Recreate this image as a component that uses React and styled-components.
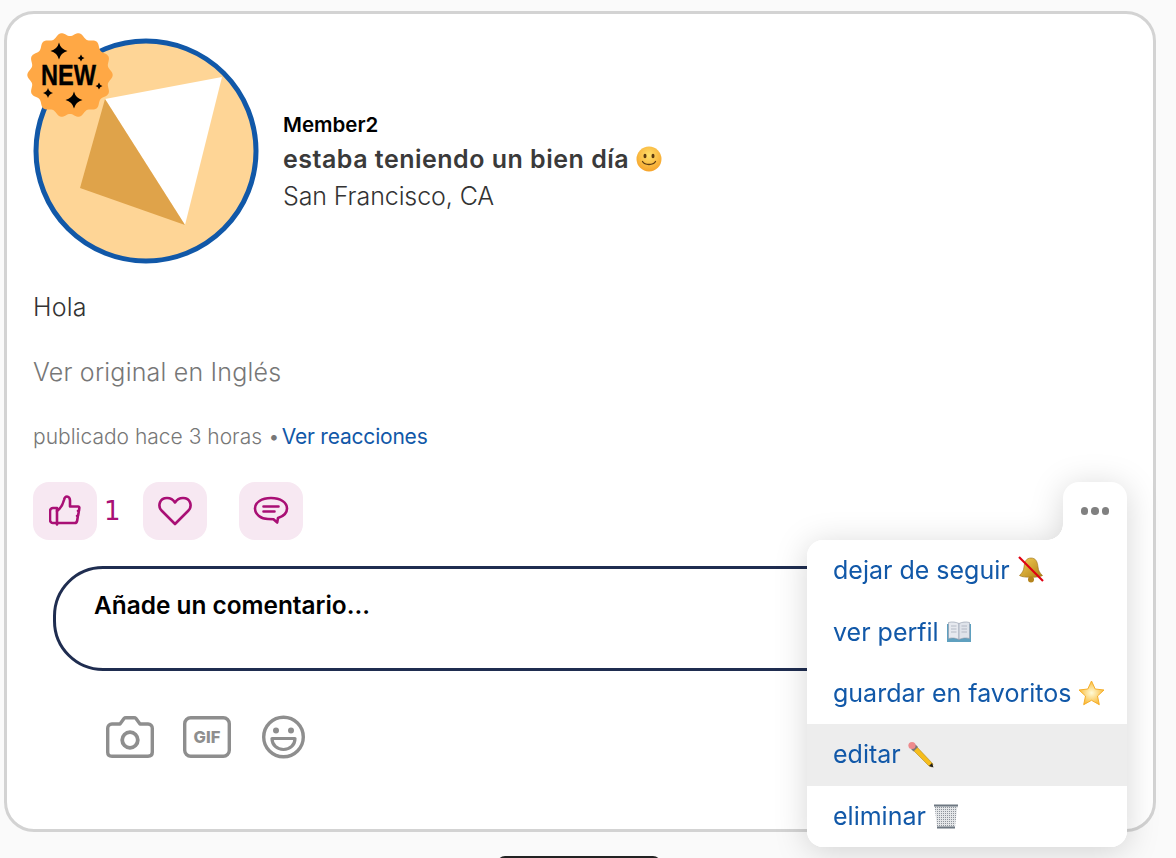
import styled, { createGlobalStyle } from "styled-components";

const GlobalStyle = createGlobalStyle`
  html, body {
    margin: 0;
    padding: 0;
    height: 858px;
    overflow: hidden;
    background: #fafafa;
    font-family: Inter, "Liberation Sans", sans-serif;
  }
`;

const Page = styled.div`
  width: 1176px;
  height: 858px;
  padding: 11px 0 0 4px;
  box-sizing: border-box;
  overflow: hidden;
`;

const Card = styled.div`
  position: relative;
  box-sizing: border-box;
  width: 1152px;
  height: 821px;
  padding: 24px 26px;
  background: #fff;
  border: 3px solid #d3d3d3;
  border-radius: 30px;
`;

const Header = styled.div`
  display: flex;
  align-items: center;
  gap: 24px;
`;

const AvatarWrap = styled.div`
  position: relative;
  width: 226px;
  height: 226px;
  flex: none;
`;

const Badge = styled.svg`
  position: absolute;
  left: -7px;
  top: -7px;
  width: 88px;
  height: 88px;
`;

const Info = styled.div`
  display: flex;
  flex-direction: column;
  padding-top: 21px;
`;

const Name = styled.div`
  font-size: 20.5px;
  line-height: 30px;
  font-weight: 600;
  color: #000;
`;

const Status = styled.div`
  display: flex;
  align-items: center;
  gap: 7px;
  font-size: 25px;
  line-height: 38px;
  font-weight: 600;
  color: #3a3a3a;
  letter-spacing: 0.5px;
`;

const Place = styled.div`
  font-size: 25px;
  line-height: 36px;
  font-weight: 300;
  color: #333;
  letter-spacing: -0.1px;
`;

const Body = styled.div`
  margin-top: ${(p) => p.$top}px;
  font-size: 25px;
  line-height: 30px;
  font-weight: 300;
  letter-spacing: 0.2px;
  color: ${(p) => p.$color};
`;

const Meta = styled.div`
  margin-top: 35px;
  font-size: 21px;
  line-height: 30px;
  font-weight: 300;
  color: #777;
`;

const MetaLink = styled.span`
  margin-left: -4px;
  color: #1158a8;
  font-weight: 400;
  letter-spacing: -0.2px;
`;

const Actions = styled.div`
  display: flex;
  align-items: center;
  margin-top: 30px;
  height: 58px;
`;

const ActionButton = styled.div`
  display: flex;
  align-items: center;
  justify-content: center;
  width: 64px;
  height: 58px;
  margin-right: ${(p) => p.$gap}px;
  background: #f7e8f2;
  border-radius: 16px;
`;

const Count = styled.span`
  width: 46px;
  padding-left: 7px;
  box-sizing: border-box;
  font-family: "DejaVu Sans", sans-serif;
  font-size: 26px;
  color: #a90f75;
`;

const MoreArea = styled.div`
  position: absolute;
  right: 26px;
  top: 468px;
  width: 320px;
  filter: drop-shadow(0 4px 16px rgba(0, 0, 0, 0.16));
`;

const MoreButton = styled.div`
  display: flex;
  align-items: center;
  justify-content: center;
  gap: 3px;
  position: relative;
  width: 64px;
  height: 58px;
  margin-left: auto;
  box-sizing: border-box;
  background: #fff;
  border-radius: 16px 16px 0 0;

  &::before {
    content: "";
    position: absolute;
    left: -16px;
    bottom: 0;
    width: 16px;
    height: 16px;
    background: radial-gradient(circle at 0 0, transparent 15.5px, #fff 16px);
  }
`;

const Dot = styled.span`
  width: 7.5px;
  height: 7.5px;
  border-radius: 50%;
  background: #808080;
`;

const Menu = styled.div`
  background: #fff;
  border-radius: 16px 0 16px 16px;
  overflow: hidden;
`;

const MenuItem = styled.div`
  display: flex;
  align-items: center;
  gap: 7px;
  height: 61.4px;
  padding: 0 0 1px 26px;
  box-sizing: border-box;
  font-size: 25px;
  font-weight: 400;
  color: #1158a8;
  background: ${(p) => (p.$active ? "#ededed" : "#fff")};
`;

const CommentBox = styled.div`
  box-sizing: border-box;
  height: 105px;
  margin: 26px 0 0 20px;
  padding: 21px 38px;
  border: 3px solid #1f2d50;
  border-radius: 50px;
  font-size: 24.4px;
  line-height: 30px;
  font-weight: 600;
  color: #000;
`;

const Tools = styled.div`
  display: flex;
  align-items: center;
  gap: 29px;
  margin: 44px 0 0 73px;
`;

const ToolSlot = styled.div`
  display: flex;
  margin-left: ${(p) => p.$left}px;
`;

const BottomPill = styled.div`
  width: 164px;
  height: 8px;
  margin: 24px 0 0 493px;
  background: #222;
  border-radius: 24px 24px 0 0;
`;

const scallopPath = () => {
  const points = [];
  for (let i = 0; i < 240; i++) {
    const a = (i / 240) * Math.PI * 2;
    const r = 40.8 + 1.9 * Math.cos(a * 14);
    points.push(`${(44 + r * Math.cos(a)).toFixed(2)} ${(44 + r * Math.sin(a)).toFixed(2)}`);
  }
  return `M${points.join("L")}Z`;
};

const starPath = (x, y, r) => {
  const k = r * 0.2;
  return `M${x} ${y - r}Q${x + k} ${y - k} ${x + r} ${y}Q${x + k} ${y + k} ${x} ${y + r}Q${x - k} ${y + k} ${x - r} ${y}Q${x - k} ${y - k} ${x} ${y - r}Z`;
};

const Avatar = () => (
  <AvatarWrap>
    <svg width="226" height="226" viewBox="33 38 226 226">
      <circle cx="146" cy="151" r="110" fill="#fed596" stroke="#1158a8" strokeWidth="5" />
      <polygon points="105,99 222,77 185,225" fill="#fff" />
      <polygon points="105,99 80,188 185,225" fill="#dfa34a" />
    </svg>
    <Badge viewBox="0 0 88 88">
      <path d={scallopPath()} fill="#ffa845" />
      {[[33, 20, 8.500], [55, 27, 3.500], [22, 62, 5], [48, 69, 8.500], [73, 55, 3.500]].map(([x, y, r]) => (
        <path key={x} d={starPath(x, y, r)} fill="#000" />
      ))}
      <text x="15" y="53.500" fontFamily="Liberation Sans" fontWeight="700" fontSize="29" textLength="55" lengthAdjust="spacingAndGlyphs" fill="#000" stroke="#000" strokeWidth=".4">NEW</text>
    </Badge>
  </AvatarWrap>
);

const SmileEmoji = () => (
  <svg width="26" height="26" viewBox="0 0 26 26">
    <defs>
      <radialGradient id="sm" cx="50%" cy="35%" r="65%">
        <stop offset="0" stopColor="#ffe06a" />
        <stop offset="1" stopColor="#f6a32a" />
      </radialGradient>
    </defs>
    <circle cx="13" cy="13" r="12.500" fill="url(#sm)" />
    <ellipse cx="9" cy="10" rx="1.500" ry="2.200" fill="#5b3a10" />
    <ellipse cx="17" cy="10" rx="1.500" ry="2.200" fill="#5b3a10" />
    <path d="M6.500 15.500c2.500 4 10.500 4 13 0" fill="none" stroke="#5b3a10" strokeWidth="1.300" strokeLinecap="round" />
  </svg>
);

const BellEmoji = () => (
  <svg width="28" height="28" viewBox="0 0 28 28">
    <defs>
      <linearGradient id="bl" x1="0" y1="0" x2="1" y2="1">
        <stop offset="0" stopColor="#f5cf55" />
        <stop offset="1" stopColor="#b07f14" />
      </linearGradient>
    </defs>
    <path d="M14 2c-5 0-6.500 4-7 9-.4 4-2 6-4.500 8.500C6 22 22 22 25.500 19.500 23 17 21.400 15 21 11c-.5-5-2-9-7-9z" fill="url(#bl)" stroke="#9a6f12" strokeWidth=".6" />
    <circle cx="14" cy="23.500" r="3" fill="#b5841c" />
    <path d="M2 1l24 24" stroke="#e00012" strokeWidth="2.200" />
  </svg>
);

const BookEmoji = () => (
  <svg width="26" height="22" viewBox="0 0 26 22">
    <path d="M1 3h24v18H1z" fill="#5fa0bf" />
    <path d="M2.500 1.500C6 .5 10 1 13 2.500v16C10 17 6 16.500 2.500 17.500z" fill="#e6e9ef" stroke="#8d97a8" strokeWidth=".6" />
    <path d="M23.500 1.500C20 .5 16 1 13 2.500v16c3-1.500 7-2 10.500-1z" fill="#dfe3ea" stroke="#8d97a8" strokeWidth=".6" />
    <path d="M5 5h5.500M5 8h5.500M5 11h5.500M15.500 5H21M15.500 8H21M15.500 11H21" stroke="#a8afbc" strokeWidth=".8" />
  </svg>
);

const StarEmoji = () => (
  <svg width="27" height="26" viewBox="0 0 27 26">
    <defs>
      <radialGradient id="st" cx="50%" cy="50%" r="55%">
        <stop offset="0" stopColor="#fffbd8" />
        <stop offset="1" stopColor="#f9b52d" />
      </radialGradient>
    </defs>
    <path d="M13.500 1l3.700 8 8.800 1-6.500 6 1.800 8.700-7.800-4.400-7.800 4.400L7.500 16 1 10l8.800-1z" fill="url(#st)" stroke="#f5ae2a" strokeWidth="1" strokeLinejoin="round" />
  </svg>
);

const PencilEmoji = () => (
  <svg width="27" height="27" viewBox="0 0 27 27">
    <path d="M8 5l17 18-1 3-3-1L4 8z" fill="#f6bd1c" stroke="#a37a10" strokeWidth=".5" />
    <path d="M21 25l3-3 1.500 4.500z" fill="#1f1f1f" />
    <path d="M3 8L7.500 3.500 10 6 5.500 10.500z" fill="#777" />
    <circle cx="4" cy="4.500" r="3.600" fill="#ee8a8c" />
  </svg>
);

const TrashEmoji = () => (
  <svg width="26" height="26" viewBox="0 0 26 26">
    <defs>
      <pattern id="mesh" width="2" height="2" patternUnits="userSpaceOnUse">
        <rect width="2" height="2" fill="#e4e6e8" />
        <rect width="1" height="1" fill="#8d939b" />
      </pattern>
    </defs>
    <path d="M1.500 2h23l-2.500 22H4z" fill="url(#mesh)" />
    <path d="M1 2.500h24" stroke="#6e7882" strokeWidth="2" />
    <path d="M4 24.500h18" stroke="#6e7882" strokeWidth="2" />
  </svg>
);

const ThumbIcon = () => (
  <svg width="32" height="32" viewBox="0 0 32 32" fill="none" stroke="#a90f75" strokeWidth="2.600" strokeLinejoin="round" strokeLinecap="round">
    <path d="M8 16c4-3 6-7 7-11 .3-1.500 1-3.500 3-3.500 1.500 0 3 1.500 3 4v6h8c1 0 1.500.7 1.300 1.700l-.3 2.300-1 .5.800.5-.7 4-1 .5.700.5-.6 4c-.2 1.500-1.200 2.500-2.500 2.500H4a3 3 0 0 1-3-3v-9a3 3 0 0 1 3-3h4z" />
    <path d="M8 16v13.500" />
  </svg>
);

const HeartIcon = () => (
  <svg width="36" height="32" viewBox="0 0 36 32" fill="none" stroke="#a90f75" strokeWidth="2.600" strokeLinejoin="round">
    <path d="M18 29L4.500 15.500C0.500 11 2.500 3 10 3c3.800 0 6.500 2 8 4.500C19.500 5 22.200 3 26 3c7.500 0 9.500 8 5.500 12.500z" />
  </svg>
);

const CommentIcon = () => (
  <svg width="36" height="30" viewBox="0 0 36 30" fill="none" stroke="#a90f75" strokeWidth="2.600" strokeLinejoin="round" strokeLinecap="round">
    <path d="M18 2C8.500 2 2 6.500 2 12.500S8 23 15 23c2.500 0 4 0 5.500.3l3.700 3.200.8-4.500C30 20.500 34 17 34 12.500 34 6.500 27.500 2 18 2z" />
    <path d="M10.500 10.500h15M10.500 15.500h11" />
  </svg>
);

const CameraIcon = () => (
  <svg width="48" height="42" viewBox="0 0 48 42" fill="none" stroke="#8e8e8e" strokeWidth="3.400" strokeLinejoin="round">
    <path d="M6 8h8l4-5.500c.5-.6 1-.8 2-.8h8c1 0 1.500.2 2 .8L34 8h8c2.500 0 4.300 1.800 4.300 4.300v24c0 2.500-1.800 4-4.300 4H6c-2.500 0-4.300-1.500-4.300-4v-24C1.700 9.800 3.500 8 6 8z" />
    <circle cx="24" cy="24" r="7.800" strokeWidth="3.800" />
  </svg>
);

const GifIcon = () => (
  <svg width="48" height="42" viewBox="0 0 48 42" fill="none">
    <rect x="1.700" y="1.700" width="44.600" height="38.600" rx="6" stroke="#8e8e8e" strokeWidth="3.400" />
    <text x="24" y="27" textAnchor="middle" fontFamily="Inter" fontWeight="800" fontSize="16.500" fill="#8e8e8e">GIF</text>
  </svg>
);

const SmileIcon = () => (
  <svg width="43" height="44" viewBox="0 0 43 44" fill="none">
    <circle cx="21.500" cy="22" r="19.800" stroke="#8e8e8e" strokeWidth="3.400" />
    <circle cx="14" cy="15.500" r="3" fill="#8e8e8e" />
    <circle cx="29" cy="15.500" r="3" fill="#8e8e8e" />
    <path d="M10 23.500h23c0 6.500-5 11-11.500 11S10 30 10 23.500z" stroke="#8e8e8e" strokeWidth="3.200" strokeLinejoin="round" />
  </svg>
);

const App = () => (
  <Page>
    <GlobalStyle />
    <Card>
      <Header>
        <Avatar />
        <Info>
          <Name>Member2</Name>
          <Status>estaba teniendo un bien día <SmileEmoji /></Status>
          <Place>San Francisco, CA</Place>
        </Info>
      </Header>
      <Body $top={28} $color="#333">Hola</Body>
      <Body $top={35} $color="#777">Ver original en Inglés</Body>
      <Meta>publicado hace 3 horas • <MetaLink>Ver reacciones</MetaLink></Meta>
      <Actions>
        <ActionButton $gap={0}><ThumbIcon /></ActionButton>
        <Count>1</Count>
        <ActionButton $gap={32}><HeartIcon /></ActionButton>
        <ActionButton $gap={0}><CommentIcon /></ActionButton>
      </Actions>
      <CommentBox>Añade un comentario...</CommentBox>
      <Tools>
        <CameraIcon />
        <GifIcon />
        <ToolSlot $left={2}><SmileIcon /></ToolSlot>
      </Tools>
      <MoreArea>
        <MoreButton><Dot /><Dot /><Dot /></MoreButton>
        <Menu>
          <MenuItem>dejar de seguir <BellEmoji /></MenuItem>
          <MenuItem>ver perfil <BookEmoji /></MenuItem>
          <MenuItem>guardar en favoritos <StarEmoji /></MenuItem>
          <MenuItem $active>editar <PencilEmoji /></MenuItem>
          <MenuItem>eliminar <TrashEmoji /></MenuItem>
        </Menu>
      </MoreArea>
    </Card>
    <BottomPill />
  </Page>
);

export default App;
